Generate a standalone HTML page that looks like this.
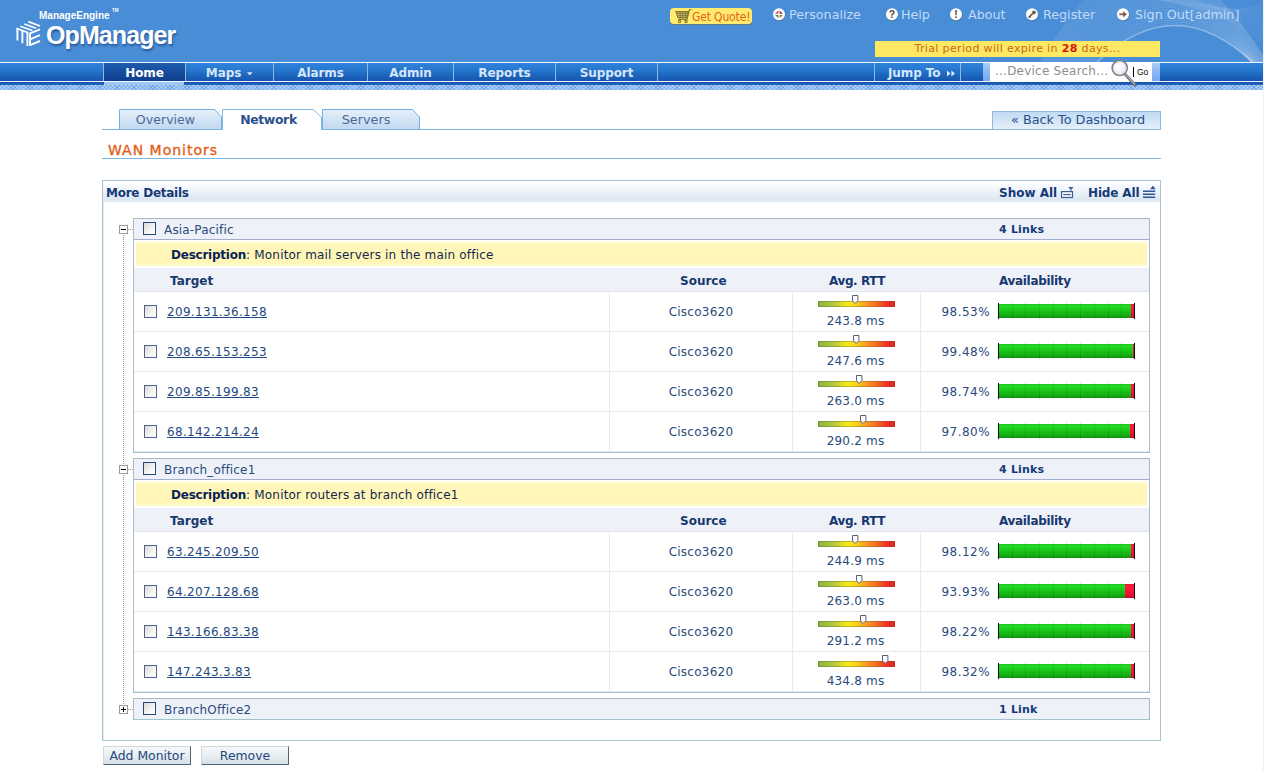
<!DOCTYPE html>
<html lang="en">
<head>
<meta charset="utf-8">
<title>OpManager - WAN Monitors</title>
<style>
*{box-sizing:border-box;margin:0;padding:0}
html,body{width:1264px;height:771px;overflow:hidden;background:#fff}
body{position:relative;font-family:"DejaVu Sans","Liberation Sans",sans-serif;font-size:12px;color:#1f3f6e}
.abs{position:absolute}
a{color:inherit}
/* ---------- header ---------- */
#hdr{position:absolute;left:0;top:0;width:1264px;height:63px;background:#488dd6;overflow:hidden}
#logo-me{position:absolute;left:39px;top:10px;font:bold 10px/12px "Liberation Sans",sans-serif;color:#fff;white-space:nowrap}
#logo-tm{position:absolute;left:112px;top:8px;font:bold 4.5px/6px "Liberation Sans",sans-serif;color:#fff}
#logo-op{position:absolute;left:46px;top:20px;font:bold 25px/30px "Liberation Sans",sans-serif;color:#fff;letter-spacing:-0.9px;white-space:nowrap;text-shadow:1px 2px 2px rgba(20,50,110,.55)}
.tl{position:absolute;top:6px;height:17px;line-height:17px;font-size:12.7px;color:#c2dbf6;white-space:nowrap}
.ic{position:absolute;top:8px;width:13px;height:13px}
#quote{position:absolute;left:670px;top:8px;width:82px;height:16px;border-radius:4px;background:#ffec6e;box-shadow:0 1px 0 rgba(120,110,50,.55)}
#quote span{position:absolute;left:22px;top:0;line-height:18px;font-family:"DejaVu Sans Condensed","DejaVu Sans","Liberation Sans",sans-serif;font-size:12px;letter-spacing:-.15px;color:#e6611b;white-space:nowrap}
#trial{position:absolute;left:875px;top:41px;width:285px;height:16px;background:#ffe862;color:#c8691c;font-size:11px;line-height:15px;text-align:center;letter-spacing:.35px;white-space:nowrap}
#trial b{color:#d81208}
/* ---------- nav ---------- */
#nav{position:absolute;left:0;top:62px;width:1264px;height:20px;background:linear-gradient(#2d82da 0,#2878d0 35%,#1c64bc 70%,#1856ac 100%);border-top:1px solid #f2f7fd;border-bottom:1px solid #f4f8fd}
#nav2{position:absolute;left:0;top:82px;width:1264px;height:3px;background:linear-gradient(#174fa6,#2468c2)}
#nav3{position:absolute;left:0;top:85px;width:1264px;height:5px;background-color:#a6ccf8;background-image:repeating-linear-gradient(45deg,rgba(50,110,200,.28) 0,rgba(50,110,200,.28) 1px,transparent 1px,transparent 3px),repeating-linear-gradient(135deg,rgba(50,110,200,.28) 0,rgba(50,110,200,.28) 1px,transparent 1px,transparent 3px)}
.ni{position:absolute;top:0;height:18px;line-height:20px;text-align:center;font-weight:bold;font-size:12px;color:#d5e6fa;border-left:1px solid #8abaec;letter-spacing:-.1px;white-space:nowrap}
#home{background:linear-gradient(#1c5cae,#154a98 60%,#103f8e);color:#fff}
#homeu{position:absolute;left:104px;top:82px;width:80px;height:3px;background:#a0c8f6}
#srch{position:absolute;left:990px;top:62px;width:162px;height:20px;background:#fff;color:#8e8e8e;font-size:12px;line-height:18px;padding-left:5px;white-space:nowrap;letter-spacing:.23px}
#go{position:absolute;left:1137px;top:66px;font:8.5px/12px "Liberation Sans",sans-serif;color:#000}
#gobar{position:absolute;left:1133px;top:67px;width:1px;height:10px;background:#000}
#sblk{position:absolute;left:1152px;top:63px;width:8px;height:18px;background:linear-gradient(#aacdf8,#8ab8f4 50%,#74a8ee)}

/* ---------- tabs / title ---------- */
.tabt{position:absolute;top:111px;height:17px;line-height:17px;font-size:13px;color:#4a6a96;text-align:center;white-space:nowrap}
#tline{position:absolute;left:102px;top:129px;width:1059px;height:1px;background:#7ab5e6}
#back{position:absolute;left:992px;top:111px;width:169px;height:19px;border:1px solid #8fb9e0;background:linear-gradient(#c0d9f2,#e6f0fb);font-size:12.8px;padding-left:3px;line-height:16px;text-align:center;color:#27508a;white-space:nowrap}
#title{position:absolute;left:108px;top:141px;font-size:14px;line-height:18px;color:#e45e18;letter-spacing:1px;white-space:nowrap;-webkit-text-stroke:.35px #e45e18}
#uline{position:absolute;left:102px;top:158px;width:1059px;height:1px;background:#7ab5e6}
/* ---------- panel ---------- */
#panel{position:absolute;left:102px;top:180px;width:1059px;height:561px;border:1px solid #a9c3d0;border-bottom-color:#a6cad0;box-shadow:inset 1px 0 0 #e3ebf1}
#phead{position:absolute;left:103px;top:181px;width:1057px;height:21px;background:linear-gradient(#fdfeff 0,#f2f6fb 40%,#dde7f2 92%,#e6edf4 100%);border-bottom:1px solid #dfe6ed}
.pb{position:absolute;top:186px;font-weight:bold;font-size:12px;line-height:15px;color:#153a78;white-space:nowrap}

/* ---------- groups ---------- */
.grp{position:absolute;left:133px;width:1017px;border:1px solid #a9bccd;border-top-color:#a9b6c2;border-bottom-color:#9fc4ce;background:#fff}
.gh{position:absolute;left:0;top:0;width:1015px;height:21px;background:#eef1f8;border-bottom:1px solid #a6acd0}
.gname{position:absolute;left:30px;top:3px;line-height:16px;font-size:12px;color:#2a4a7c;white-space:nowrap;letter-spacing:.17px}
.glinks{position:absolute;left:865px;top:4px;line-height:14px;font-size:11px;font-weight:bold;color:#153a78;white-space:nowrap;letter-spacing:.2px}
.cb{position:absolute;width:13px;height:13px;border:1px solid #27477a;background:linear-gradient(135deg,#d9d8d2 0,#f2f1ee 50%,#fff 100%)}
.cb2{border-color:#4a6690}
.desc{position:absolute;left:2px;top:22px;width:1011px;height:26px;background:linear-gradient(#fffef2 0,#fffad0 6%,#fff7ba 14%,#fff6b6 80%,#fff8c4 90%,#fffdf0 100%);font-size:12px;line-height:17px;padding-top:6px;padding-left:35px;color:#14284e;white-space:nowrap;letter-spacing:.18px}
.desc b{color:#0c2358;letter-spacing:-.23px}
.ch{position:absolute;left:0;top:49px;width:1015px;height:24px;background:#eef1f7;border-bottom:1px solid #e2e5ea}
.ch b{position:absolute;top:6px;line-height:15px;font-size:12px;color:#17386f;white-space:nowrap}
.row{position:absolute;left:0;width:1015px;height:40px;border-bottom:1px solid #e9e9e9}
.vs{position:absolute;top:73px;width:1px;height:160px;background:#e9e9e9}
.ip{position:absolute;left:33px;top:12px;line-height:16px;font-size:12px;color:#1f4a80;text-decoration:underline;white-space:nowrap;letter-spacing:.32px}
.src{position:absolute;left:476px;width:182px;top:12px;line-height:16px;font-size:12px;text-align:center;color:#2a4a7c;letter-spacing:.25px}
.rb{position:absolute;left:684px;top:9px;width:77px;height:6px;background:linear-gradient(90deg,#88b048 0,#a6c43c 16%,#eee81c 37%,#f8dc1c 46%,#f8a822 60%,#f46e24 75%,#ee2a24 92%,#da2c2c 100%);box-shadow:inset 0 0 0 1px rgba(100,80,30,.3)}
.rm{position:absolute;top:3px;width:7px;height:9px;overflow:visible}
.rt{position:absolute;left:658px;width:127px;top:21px;line-height:16px;font-size:12px;text-align:center;color:#2a4a7c;letter-spacing:.2px}
.pc{position:absolute;left:787px;width:69px;top:12px;line-height:16px;font-size:12px;text-align:right;color:#2a4a7c;letter-spacing:.45px}
.ab{position:absolute;left:864px;top:11px;width:137px;height:16px;border-left:1px solid #061006;border-right:1px solid #10040a}
.ab u{position:absolute;left:0;top:1px;width:135px;height:14px;background:linear-gradient(#1fb81f 0,#22dc22 10%,#1fd21f 30%,#18bc18 60%,#13a813 85%,#0f900f 100%)}
.ab u:after{content:"";position:absolute;left:0;top:-2px;width:135px;height:18px;background:repeating-linear-gradient(90deg,transparent 0,transparent 12.7px,rgba(0,60,0,.11) 12.7px,rgba(0,60,0,.11) 13.7px)}
.ab i{position:absolute;right:0;top:1px;height:14px;background:linear-gradient(#e81834,#ff1a40 20%,#f01034 70%,#c80c24)}
.tg{position:absolute;left:119px;width:9px;height:9px;border:1px solid #9a9a9a;background:#fff}
.tg:before{content:"";position:absolute;left:1px;top:3px;width:5px;height:1px;background:#000}
.tg.plus:after{content:"";position:absolute;left:3px;top:1px;width:1px;height:5px;background:#000}
.dv{position:absolute;left:123px;width:1px;background-image:repeating-linear-gradient(#9a9a9a 0,#9a9a9a 1px,transparent 1px,transparent 2px)}
.dh{position:absolute;left:128px;width:5px;height:1px;background-image:repeating-linear-gradient(90deg,#9a9a9a 0,#9a9a9a 1px,transparent 1px,transparent 2px)}
.btn{position:absolute;top:746px;height:19px;border:1px solid #cfd8da;border-right-color:#56647a;border-bottom-color:#56647a;background:linear-gradient(#f6f8fa,#e8eef1 50%,#d6e0e4);font-size:12.4px;line-height:18px;text-align:center;color:#23477e;white-space:nowrap}
</style>
</head>
<body>

<!-- ================= HEADER ================= -->
<div id="hdr">
  <svg class="abs" style="left:1000px;top:0" width="264" height="63" viewBox="0 0 264 63" fill="none" stroke="#fff" stroke-width="0.7">
    <g opacity=".24"><path d="M95.0 64.0 Q175.0 -13.0 254.0 64.0 M93.3 64.0 Q174.2 -16.6 254.0 64.0 M91.7 64.0 Q173.5 -20.3 254.1 64.0 M90.0 64.0 Q172.7 -23.9 254.1 64.0 M88.3 64.0 Q172.0 -27.5 254.2 64.0 M86.7 64.0 Q171.2 -31.2 254.3 64.0 M85.0 64.0 Q170.5 -34.8 254.5 64.0 M83.3 64.0 Q169.7 -38.5 254.6 64.0 M81.7 64.0 Q168.9 -42.1 254.8 64.0 M80.0 64.0 Q168.2 -45.7 255.0 64.0 M78.3 64.0 Q167.4 -49.4 255.3 64.0 M76.7 64.0 Q166.7 -53.0 255.6 64.0 M75.0 64.0 Q165.9 -56.6 255.9 64.0 M73.3 64.0 Q165.2 -60.3 256.2 64.0 M71.7 64.0 Q164.4 -63.9 256.5 64.0 M70.0 64.0 Q163.6 -67.5 256.9 64.0 M68.3 64.0 Q162.9 -71.2 257.3 64.0 M66.7 64.0 Q162.1 -74.8 257.7 64.0 M65.0 64.0 Q161.4 -78.5 258.2 64.0 M63.3 64.0 Q160.6 -82.1 258.6 64.0 M61.7 64.0 Q159.8 -85.7 259.1 64.0 M60.0 64.0 Q159.1 -89.4 259.7 64.0 M58.3 64.0 Q158.3 -93.0 260.2 64.0 M56.7 64.0 Q157.6 -96.6 260.8 64.0 M55.0 64.0 Q156.8 -100.3 261.4 64.0 M53.3 64.0 Q156.1 -103.9 262.0 64.0 M51.7 64.0 Q155.3 -107.5 262.7 64.0 M50.0 64.0 Q154.5 -111.2 263.4 64.0 M48.3 64.0 Q153.8 -114.8 264.1 64.0 M46.7 64.0 Q153.0 -118.5 264.8 64.0 M45.0 64.0 Q152.3 -122.1 265.6 64.0 M43.3 64.0 Q151.5 -125.7 266.4 64.0 M41.7 64.0 Q150.8 -129.4 267.2 64.0 M40.0 64.0 Q150.0 -133.0 268.0 64.0"/></g>
    <g opacity=".12"><path d="M150.0 -2.0 Q215.0 8.0 264.0 40.0 M153.1 -2.0 Q216.9 8.8 264.0 37.1 M156.2 -2.0 Q218.8 9.5 264.0 34.2 M159.2 -2.0 Q220.8 10.3 264.0 31.2 M162.3 -2.0 Q222.7 11.1 264.0 28.3 M165.4 -2.0 Q224.6 11.8 264.0 25.4 M168.5 -2.0 Q226.5 12.6 264.0 22.5 M171.5 -2.0 Q228.5 13.4 264.0 19.5 M174.6 -2.0 Q230.4 14.2 264.0 16.6 M177.7 -2.0 Q232.3 14.9 264.0 13.7 M180.8 -2.0 Q234.2 15.7 264.0 10.8 M183.8 -2.0 Q236.2 16.5 264.0 7.8 M186.9 -2.0 Q238.1 17.2 264.0 4.9 M190.0 -2.0 Q240.0 18.0 264.0 2.0"/></g>
    <path d="M95 64 Q175 -13 254 64" stroke-width="1.2" opacity=".3"/>
  </svg>
  <div id="logo-me">ManageEngine</div><div id="logo-tm">TM</div>
  <svg class="abs" style="left:14px;top:18px" width="30" height="32" viewBox="14 18 30 32" fill="none" stroke="#fff" stroke-width="1.9" stroke-linecap="butt">
    <path d="M16.4 28.4L28.4 32.8M20.3 26.2L32.3 30.5M24.3 24L36.2 28.3M28.3 21.6L40 26" stroke-width="1.7"/>
    <path d="M17.4 28.4V40.6M22.4 30.4V43.2M27.4 32.4V46"/>
    <path d="M30 33V46M30 33.4L40 29.4M30 39.3L40 35.2M30 45.2L40 41"/>
  </svg>
  <div id="logo-op">OpManager</div>

  <svg class="abs" style="left:675px;top:9px;z-index:2" width="18" height="15" viewBox="0 0 18 15" fill="none" stroke="#857630" stroke-width="1.1">
    <path d="M1 2.6h12.6l-1.6 6H3z" fill="#c9bd6a"/><path d="M2 4.6h11M2.6 6.6h10M5 2.6l.6 6M8 2.6v6M11 2.6l-.6 6" stroke-width=".6" stroke="#6f6228"/>
    <path d="M16.6 .8h-2.2L12 10.4H3.4"/><circle cx="4.6" cy="12.6" r="1.2"/><circle cx="11" cy="12.6" r="1.2"/>
  </svg>
  <svg class="abs" style="left:771.3px;top:6px" width="16" height="17" viewBox="0 0 16 17">
    <circle cx="8.6" cy="9.1" r="6" fill="#4a5a78" opacity=".55"/><circle cx="8" cy="8.3" r="6" fill="#fff"/><path d="M7.4 4.4v3.3H4.1z" fill="#d8386c"/><path d="M8.6 4.4v3.3h3.3z" fill="#7c3454"/><path d="M7.4 12.2V8.9H4.1z" fill="#1f9a58"/><path d="M8.6 12.2V8.9h3.3z" fill="#b0702c"/>
  </svg>
  <svg class="abs" style="left:883.5px;top:6px" width="16" height="17" viewBox="0 0 16 17">
    <circle cx="8.6" cy="9.1" r="6" fill="#4a5a78" opacity=".55"/><circle cx="8" cy="8.3" r="6" fill="#fff"/><text x="8" y="12" text-anchor="middle" font-family="Liberation Sans,sans-serif" font-weight="bold" font-size="10.5" fill="#5c4034">?</text>
  </svg>
  <svg class="abs" style="left:947.9px;top:6px" width="16" height="17" viewBox="0 0 16 17">
    <circle cx="8.6" cy="9.1" r="6" fill="#4a5a78" opacity=".55"/><circle cx="8" cy="8.3" r="6" fill="#fff"/><text x="8" y="12" text-anchor="middle" font-family="Liberation Sans,sans-serif" font-weight="bold" font-size="10.5" fill="#5c4034">!</text>
  </svg>
  <svg class="abs" style="left:1024.1px;top:6px" width="16" height="17" viewBox="0 0 16 17">
    <circle cx="8.6" cy="9.1" r="6" fill="#4a5a78" opacity=".55"/><circle cx="8" cy="8.3" r="6" fill="#fff"/><path d="M4.6 11.6L8.6 7.6" stroke="#7a5a48" stroke-width="1.7" fill="none"/><circle cx="9.9" cy="6.4" r="1.9" fill="#7a5a48"/><path d="M5.2 10.2l1.5 1.5" stroke="#7a5a48" stroke-width="1.2"/>
  </svg>
  <svg class="abs" style="left:1115.4px;top:6px" width="16" height="17" viewBox="0 0 16 17">
    <circle cx="8.6" cy="9.1" r="6" fill="#4a5a78" opacity=".55"/><circle cx="8" cy="8.3" r="6" fill="#fff"/><path d="M4.3 8.3h5.4" stroke="#7a5a48" stroke-width="1.7" fill="none"/><path d="M8.2 5.2l3.6 3.1l-3.6 3.1z" fill="#7a5a48"/>
  </svg>
  <div id="quote"><span>Get Quote!</span></div>
  <div class="tl" style="left:789px">Personalize</div>
  <div class="tl" style="left:901px">Help</div>
  <div class="tl" style="left:968px">About</div>
  <div class="tl" style="left:1043px">Register</div>
  <div class="tl" style="left:1135px">Sign Out[admin]</div>
  <div id="trial">Trial period will expire in <b>28</b> days...</div>
</div>

<!-- ================= NAV ================= -->
<div id="nav">
  <div class="ni" id="home" style="left:103px;width:82px">Home</div>
  <div class="ni" style="left:185px;width:88px">Maps<svg style="margin-left:6px;position:relative;top:-1px" width="6" height="4" viewBox="0 0 6 4"><path d="M0 .3h5.6L2.8 3.6z" fill="#d5e6fa"/></svg></div>
  <div class="ni" style="left:273px;width:94px">Alarms</div>
  <div class="ni" style="left:367px;width:86px">Admin</div>
  <div class="ni" style="left:453px;width:102px">Reports</div>
  <div class="ni" style="left:555px;width:102px">Support</div>
  <div class="ni" style="left:657px;width:218px"></div>
  <div class="ni" style="left:874px;width:86px;color:#cfe9ff;text-align:left;padding-left:13px">Jump To<svg style="position:absolute;left:72px;top:7px" width="9" height="7" viewBox="0 0 9 7"><path d="M0 .5l3.6 3L0 6.5zM4.4 .5l3.6 3l-3.6 3z" fill="#d8ecff"/></svg></div>
  <div class="ni" style="left:960px;width:30px"></div>
  <div style="position:absolute;left:983px;top:0;width:7px;height:18px;background:linear-gradient(#aacdf8,#8ab8f4 50%,#74a8ee)"></div>
</div>
<div id="nav2"></div><div id="homeu"></div><div id="nav3"></div>
<div id="srch">...Device Search...</div>
<div id="gobar"></div><div id="go">Go</div>
<svg class="abs" style="left:1106px;top:56px" width="34" height="32" viewBox="0 0 34 32">
  <defs><radialGradient id="lens" cx=".4" cy=".35" r=".7"><stop offset="0" stop-color="#fff"/><stop offset=".7" stop-color="#eef0f8"/><stop offset="1" stop-color="#d8dce8"/></radialGradient></defs>
  <path d="M19.4 18.6L29.2 29.2" stroke="#6c7078" stroke-width="3" stroke-linecap="round"/><path d="M19.2 18L28.6 28.2" stroke="#b4b8c0" stroke-width="1.1" stroke-linecap="round"/>
  <circle cx="13.7" cy="12" r="7.6" fill="url(#lens)" stroke="#7c7e84" stroke-width="1.5"/><circle cx="13.7" cy="12" r="6.4" fill="none" stroke="#c9ccd4" stroke-width=".9"/>
</svg>
<div id="sblk"></div>


<div style="position:absolute;left:1263px;top:0;width:1px;height:771px;background:#eef0f2"></div>

<!-- ================= TABS ================= -->
<svg class="abs" style="left:100px;top:105px" width="340" height="28" viewBox="0 0 340 28">
  <defs>
    <linearGradient id="tg" x1="0" y1="0" x2="0" y2="1"><stop offset="0" stop-color="#e6f0fa"/><stop offset=".5" stop-color="#d4e4f5"/><stop offset="1" stop-color="#c0d8f0"/></linearGradient>
  </defs>
  <path d="M19.5 24.5 L19.5 4.5 L114.5 4.5 L121.5 12 L121.5 24.5 Z" fill="url(#tg)" stroke="#6fb0e6" stroke-width="1"/>
  <path d="M122.5 24.5 L122.5 4.5 L213.5 4.5 L221.5 12.5 L221.5 24.5" fill="#fff" stroke="#7fb8e8" stroke-width="1"/>
  <path d="M222.5 24.5 L222.5 4.5 L312.5 4.5 L319.5 12 L319.5 24.5 Z" fill="url(#tg)" stroke="#6fb0e6" stroke-width="1"/>
</svg>
<div id="tline"></div>
<div style="position:absolute;left:223px;top:129px;width:98px;height:1px;background:#fff"></div>
<div class="tabt" style="left:119px;width:93px;font-size:12.6px">Overview</div>
<div class="tabt" style="left:222px;width:93px;font-weight:bold;color:#2c4f8e;font-size:12.4px;letter-spacing:-.35px">Network</div>
<div class="tabt" style="left:322px;width:88px;font-size:12.8px">Servers</div>
<div id="back">&laquo; Back To Dashboard</div>

<div id="title">WAN Monitors</div>
<div id="uline"></div>

<!-- ================= PANEL ================= -->
<div id="panel"></div>
<div id="phead"></div>
<div class="pb" style="left:106px;letter-spacing:-.25px">More Details</div>
<div class="pb" style="left:999px">Show All</div>
<div class="pb" style="left:1088px;letter-spacing:-.15px">Hide All</div>
<svg class="abs" style="left:1059px;top:185px" width="16" height="14" viewBox="0 0 16 14" fill="none" stroke="#3c5f96" stroke-width="1">
  <rect x="2.5" y="6.6" width="11" height="5.9" fill="#f4f7fb" stroke-width="1.2"/><path d="M4.2 9.6h7.6" stroke-width="1.1"/><path d="M12 4.5v2" stroke-width="1"/><path d="M9.2 2l2.7 2.9L14.6 2z" fill="#3c5f96" stroke="none"/>
</svg>
<svg class="abs" style="left:1141px;top:185px" width="16" height="14" viewBox="0 0 16 14" fill="none" stroke="#2e5596" stroke-width="1.4">
  <path d="M2 6.3h12.2M2 9.3h12.2M2 12.3h12.2"/><path d="M9.1 4.3l2.8-3.5l2.8 3.5z" fill="#2e5596" stroke="none"/>
</svg>

<!-- ================= GROUPS ================= -->
<div class="dv" style="top:235px;height:469px"></div>
<div class="tg" style="top:225px"></div><div class="dh" style="top:229px"></div>
<div class="tg" style="top:465px"></div><div class="dh" style="top:469px"></div>
<div class="tg plus" style="top:705px"></div><div class="dh" style="top:709px"></div>
<div class="grp" style="top:218px;height:235px">
  <div class="gh"><div class="cb" style="left:9px;top:3px"></div><div class="gname">Asia-Pacific</div><div class="glinks">4 Links</div></div>
  <div class="desc"><b>Description</b>: Monitor mail servers in the main office</div>
  <div class="ch"><b style="left:36px">Target</b><b style="left:546px">Source</b><b style="left:695px;letter-spacing:-.4px">Avg. RTT</b><b style="left:865px;letter-spacing:-.32px">Availability</b></div>
  <div class="vs" style="left:475px"></div><div class="vs" style="left:658px"></div><div class="vs" style="left:786px"></div>
  <div class="row" style="top:73px">
    <div class="cb cb2" style="left:10px;top:13px"></div>
    <a class="ip">209.131.36.158</a>
    <div class="src">Cisco3620</div>
    <div class="rb"></div><svg class="rm" style="left:718px" viewBox="0 0 7 9"><path d="M.5 .5h5.4v5.2L3.2 8.4L.5 5.7z" fill="#fff" stroke="#566078"/></svg>
    <div class="rt">243.8 ms</div>
    <div class="pc">98.53%</div>
    <div class="ab"><u></u><i style="width:3px"></i></div>
  </div>
  <div class="row" style="top:113px">
    <div class="cb cb2" style="left:10px;top:13px"></div>
    <a class="ip">208.65.153.253</a>
    <div class="src">Cisco3620</div>
    <div class="rb"></div><svg class="rm" style="left:719px" viewBox="0 0 7 9"><path d="M.5 .5h5.4v5.2L3.2 8.4L.5 5.7z" fill="#fff" stroke="#566078"/></svg>
    <div class="rt">247.6 ms</div>
    <div class="pc">99.48%</div>
    <div class="ab"><u></u><i style="width:1px"></i></div>
  </div>
  <div class="row" style="top:153px">
    <div class="cb cb2" style="left:10px;top:13px"></div>
    <a class="ip">209.85.199.83</a>
    <div class="src">Cisco3620</div>
    <div class="rb"></div><svg class="rm" style="left:722px" viewBox="0 0 7 9"><path d="M.5 .5h5.4v5.2L3.2 8.4L.5 5.7z" fill="#fff" stroke="#566078"/></svg>
    <div class="rt">263.0 ms</div>
    <div class="pc">98.74%</div>
    <div class="ab"><u></u><i style="width:3px"></i></div>
  </div>
  <div class="row" style="top:193px">
    <div class="cb cb2" style="left:10px;top:13px"></div>
    <a class="ip">68.142.214.24</a>
    <div class="src">Cisco3620</div>
    <div class="rb"></div><svg class="rm" style="left:726px" viewBox="0 0 7 9"><path d="M.5 .5h5.4v5.2L3.2 8.4L.5 5.7z" fill="#fff" stroke="#566078"/></svg>
    <div class="rt">290.2 ms</div>
    <div class="pc">97.80%</div>
    <div class="ab"><u></u><i style="width:4px"></i></div>
  </div>
</div>
<div class="grp" style="top:458px;height:235px">
  <div class="gh"><div class="cb" style="left:9px;top:3px"></div><div class="gname">Branch_office1</div><div class="glinks">4 Links</div></div>
  <div class="desc"><b>Description</b>: Monitor routers at branch office1</div>
  <div class="ch"><b style="left:36px">Target</b><b style="left:546px">Source</b><b style="left:695px;letter-spacing:-.4px">Avg. RTT</b><b style="left:865px;letter-spacing:-.32px">Availability</b></div>
  <div class="vs" style="left:475px"></div><div class="vs" style="left:658px"></div><div class="vs" style="left:786px"></div>
  <div class="row" style="top:73px">
    <div class="cb cb2" style="left:10px;top:13px"></div>
    <a class="ip">63.245.209.50</a>
    <div class="src">Cisco3620</div>
    <div class="rb"></div><svg class="rm" style="left:718px" viewBox="0 0 7 9"><path d="M.5 .5h5.4v5.2L3.2 8.4L.5 5.7z" fill="#fff" stroke="#566078"/></svg>
    <div class="rt">244.9 ms</div>
    <div class="pc">98.12%</div>
    <div class="ab"><u></u><i style="width:3px"></i></div>
  </div>
  <div class="row" style="top:113px">
    <div class="cb cb2" style="left:10px;top:13px"></div>
    <a class="ip">64.207.128.68</a>
    <div class="src">Cisco3620</div>
    <div class="rb"></div><svg class="rm" style="left:722px" viewBox="0 0 7 9"><path d="M.5 .5h5.4v5.2L3.2 8.4L.5 5.7z" fill="#fff" stroke="#566078"/></svg>
    <div class="rt">263.0 ms</div>
    <div class="pc">93.93%</div>
    <div class="ab"><u></u><i style="width:9px"></i></div>
  </div>
  <div class="row" style="top:153px">
    <div class="cb cb2" style="left:10px;top:13px"></div>
    <a class="ip">143.166.83.38</a>
    <div class="src">Cisco3620</div>
    <div class="rb"></div><svg class="rm" style="left:726px" viewBox="0 0 7 9"><path d="M.5 .5h5.4v5.2L3.2 8.4L.5 5.7z" fill="#fff" stroke="#566078"/></svg>
    <div class="rt">291.2 ms</div>
    <div class="pc">98.22%</div>
    <div class="ab"><u></u><i style="width:3px"></i></div>
  </div>
  <div class="row" style="top:193px">
    <div class="cb cb2" style="left:10px;top:13px"></div>
    <a class="ip">147.243.3.83</a>
    <div class="src">Cisco3620</div>
    <div class="rb"></div><svg class="rm" style="left:748px" viewBox="0 0 7 9"><path d="M.5 .5h5.4v5.2L3.2 8.4L.5 5.7z" fill="#fff" stroke="#566078"/></svg>
    <div class="rt">434.8 ms</div>
    <div class="pc">98.32%</div>
    <div class="ab"><u></u><i style="width:3px"></i></div>
  </div>
</div>
<div class="grp" style="top:698px;height:22px">
  <div class="gh" style="height:20px;border-bottom:0"><div class="cb" style="left:9px;top:3px"></div><div class="gname">BranchOffice2</div><div class="glinks">1 Link</div></div>
</div>
<div class="btn" style="left:103px;width:88px">Add Monitor</div>
<div class="btn" style="left:201px;width:88px">Remove</div>



</body>
</html>
